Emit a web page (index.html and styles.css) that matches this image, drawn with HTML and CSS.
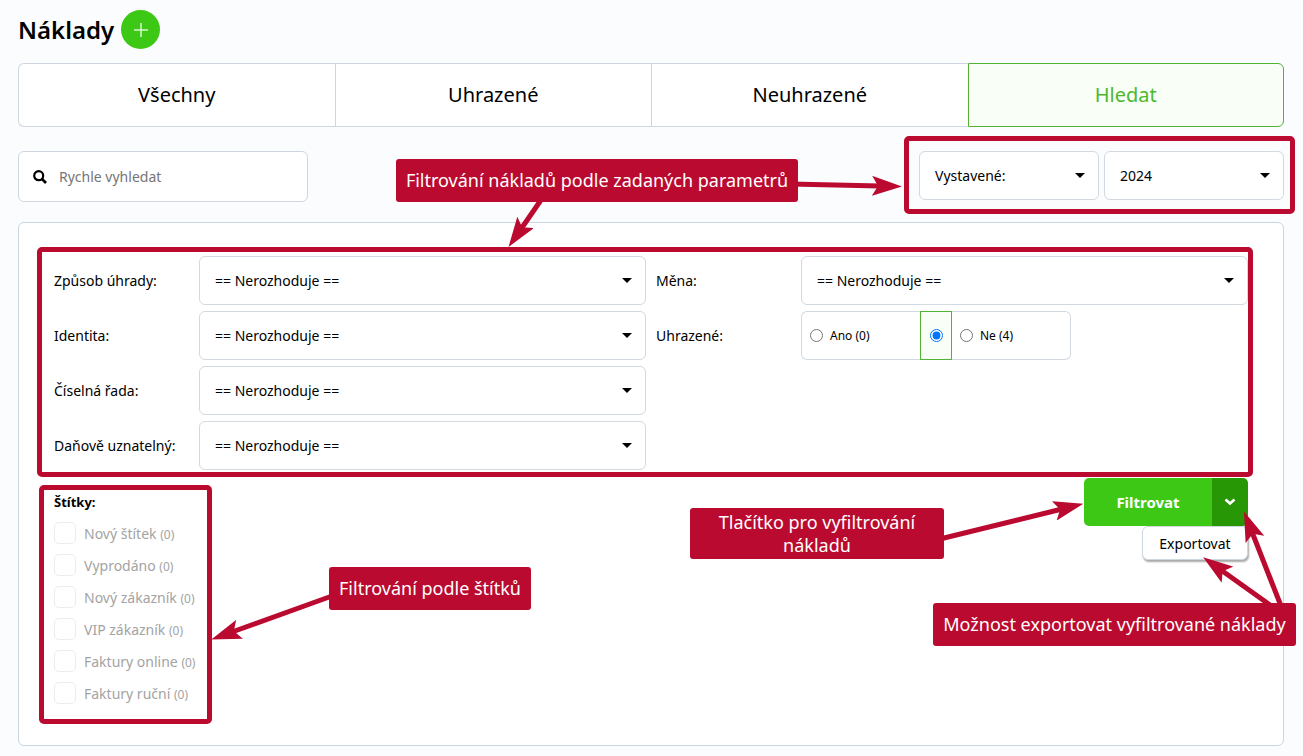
FILE: index.html
```html
<!DOCTYPE html>
<html lang="cs">
<head>
    <meta charset="UTF-8">
    <meta name="viewport" content="width=device-width, initial-scale=1.0">
    <title>Náklady</title>
    <link rel="stylesheet" href="styles.css">
</head>
<body>
    <header class="page-header">
        <h1>Náklady</h1>
        <button type="button" class="add-button" aria-label="Přidat náklad">
            <svg width="14" height="14" viewBox="0 0 14 14"><path d="M7 0v14M0 7h14" stroke="#d5f5cc" stroke-width="1.5"/></svg>
        </button>
    </header>

    <nav class="tabs">
        <a href="#vsechny">Všechny</a>
        <a href="#uhrazene">Uhrazené</a>
        <a href="#neuhrazene">Neuhrazené</a>
        <a href="#hledat" class="active">Hledat</a>
    </nav>

    <div class="toolbar">
        <label class="search">
            <svg width="14" height="14" viewBox="0 0 14 14" fill="none" stroke="#000"><circle cx="5.7" cy="5.7" r="4.5" stroke-width="2.2"/><path d="M9 9l4 4" stroke-width="2.6"/></svg>
            <input type="text" placeholder="Rychle vyhledat" aria-label="Rychle vyhledat">
        </label>
        <div class="period marked">
            <div class="select"><select aria-label="Typ data"><option>Vystavené:</option></select></div>
            <div class="select"><select aria-label="Rok"><option>2024</option></select></div>
        </div>
    </div>

    <form class="panel">
        <div class="filters marked">
            <div class="column">
                <div class="field">
                    <label for="payment">Způsob úhrady:</label>
                    <div class="select"><select id="payment"><option>== Nerozhoduje ==</option></select></div>
                </div>
                <div class="field">
                    <label for="identity">Identita:</label>
                    <div class="select"><select id="identity"><option>== Nerozhoduje ==</option></select></div>
                </div>
                <div class="field">
                    <label for="series">Číselná řada:</label>
                    <div class="select"><select id="series"><option>== Nerozhoduje ==</option></select></div>
                </div>
                <div class="field">
                    <label for="deductible">Daňově uznatelný:</label>
                    <div class="select"><select id="deductible"><option>== Nerozhoduje ==</option></select></div>
                </div>
            </div>
            <div class="column">
                <div class="field">
                    <label for="currency">Měna:</label>
                    <div class="select"><select id="currency"><option>== Nerozhoduje ==</option></select></div>
                </div>
                <div class="field" role="radiogroup" aria-labelledby="paid-label">
                    <span id="paid-label" class="field-name">Uhrazené:</span>
                    <div class="radios">
                        <label class="radio"><input type="radio" name="paid" value="1">Ano (0)</label>
                        <label class="radio any"><input type="radio" name="paid" value="" aria-label="Nerozhoduje" checked></label>
                        <label class="radio"><input type="radio" name="paid" value="0">Ne (4)</label>
                    </div>
                </div>
            </div>
        </div>

        <div class="panel-bottom">
            <div class="tags marked">
                <h2>Štítky:</h2>
                <label class="tag"><input type="checkbox" disabled><span>Nový štítek <small>(0)</small></span></label>
                <label class="tag"><input type="checkbox" disabled><span>Vyprodáno <small>(0)</small></span></label>
                <label class="tag"><input type="checkbox" disabled><span>Nový zákazník <small>(0)</small></span></label>
                <label class="tag"><input type="checkbox" disabled><span>VIP zákazník <small>(0)</small></span></label>
                <label class="tag"><input type="checkbox" disabled><span>Faktury online <small>(0)</small></span></label>
                <label class="tag"><input type="checkbox" disabled><span>Faktury ruční <small>(0)</small></span></label>
            </div>
            <div class="actions">
                <div class="split-button">
                    <button type="submit" class="filter-button">Filtrovat</button>
                    <button type="button" class="more-button" aria-label="Další akce">
                        <svg width="12" height="8" viewBox="0 0 12 8"><path d="M1.500 1.500L6 5.500l4.500-4" fill="none" stroke="#fff" stroke-width="2.600"/></svg>
                    </button>
                </div>
                <button type="button" class="export-button">Exportovat</button>
            </div>
        </div>
    </form>

    <!-- notes over the page -->
    <div class="notes">
        <svg class="arrows" width="1303" height="756" viewBox="0 0 1303 756">
            <defs>
                <marker id="head" markerUnits="userSpaceOnUse" markerWidth="30" markerHeight="20" refX="8" refY="10" orient="auto">
                    <path d="M0 0L30 10L0 20L6 10z" fill="#bb0a30"/>
                </marker>
            </defs>
            <g stroke="#bb0a30" stroke-width="5">
                <path d="M790 184L880 186" marker-end="url(#head)"/>
                <path d="M541 200L521 229" marker-end="url(#head)"/>
                <path d="M332 596L232 632" marker-end="url(#head)"/>
                <path d="M940 539L1062 509" marker-end="url(#head)"/>
                <path d="M1270 605L1221 570" marker-end="url(#head)"/>
                <path d="M1281 606L1252 532" marker-end="url(#head)"/>
            </g>
        </svg>
        <p class="note note-params">Filtrování nákladů podle zadaných parametrů</p>
        <p class="note note-button">Tlačítko pro vyfiltrování nákladů</p>
        <p class="note note-tags">Filtrování podle štítků</p>
        <p class="note note-export">Možnost exportovat vyfiltrované náklady</p>
    </div>
</body>
</html>
```

FILE: styles.css
```css
* {
    box-sizing: border-box;
}

body {
    position: relative;
    margin: 0;
    padding: 10px 19px 10px 18px;
    background: #fbfcfe;
    color: #000;
    font-family: "Noto Sans", sans-serif;
    font-size: 14px;
}

input,
select,
button {
    font: inherit;
    color: inherit;
}

.page-header {
    display: flex;
    align-items: center;
    gap: 7px;
    margin-bottom: 14px;
}

h1 {
    margin: 0;
    font-size: 24px;
    line-height: 36px;
    font-weight: 600;
}

.add-button {
    display: flex;
    align-items: center;
    justify-content: center;
    width: 39px;
    height: 39px;
    padding: 0;
    border: none;
    border-radius: 50%;
    background: #3dc816;
}

/* tabs */
.tabs {
    display: grid;
    grid-template-columns: repeat(4, 1fr);
    margin-bottom: 24px;
}

.tabs a {
    height: 64px;
    border: 1px solid #ced7e0;
    border-right: none;
    background: #fff;
    color: #000;
    font-size: 20px;
    line-height: 62px;
    text-align: center;
    text-decoration: none;
}

.tabs a:first-child {
    border-radius: 6px 0 0 6px;
}

.tabs .active {
    border: 1px solid #52b435;
    border-radius: 0 6px 6px 0;
    background: #f9fff7;
    color: #4cb92d;
}

/* search and period */
.toolbar {
    display: flex;
    justify-content: space-between;
    align-items: flex-start;
    margin-bottom: 20px;
}

.search {
    display: flex;
    align-items: center;
    gap: 12px;
    width: 290px;
    height: 51px;
    padding: 0 14px;
    border: 1px solid #ced7e0;
    border-radius: 6px;
    background: #fff;
}

.search input {
    flex: 1;
    min-width: 0;
    padding: 0;
    border: none;
    outline: none;
    background: none;
}

.search input::placeholder {
    color: #757575;
}

.period {
    display: grid;
    grid-template-columns: 180px 180px;
    gap: 5px;
}

.select {
    position: relative;
    flex: 1;
}

.select::after {
    content: "";
    position: absolute;
    top: 22px;
    right: 14px;
    border: 5px solid transparent;
    border-top-color: #000;
    border-bottom: none;
    pointer-events: none;
}

.select select {
    display: block;
    width: 100%;
    height: 49px;
    padding: 0 30px 0 15px;
    border: 1px solid #d3d9e0;
    border-radius: 6px;
    background: #fff;
    appearance: none;
}

/* red frame around a highlighted group */
.marked {
    position: relative;
}

.marked::after {
    content: "";
    position: absolute;
    border: 5px solid #bb0a30;
    border-radius: 5px;
    pointer-events: none;
}

.period::after {
    inset: -15px -11px -14px -15px;
}

.filters::after {
    inset: -9px -5px -7px -17px;
}

.tags::after {
    inset: 7px 0 -20px -15px;
}

/* filter panel */
.panel {
    padding: 33px 35px 41px;
    border: 1px solid #c8d6e2;
    border-radius: 6px;
    background: #fff;
}

.filters {
    display: grid;
    grid-template-columns: 1fr 1fr;
    gap: 10px;
}

.column {
    display: flex;
    flex-direction: column;
    gap: 6px;
}

.field {
    display: flex;
    align-items: center;
}

.field > label,
.field-name {
    width: 145px;
}

.radios {
    display: grid;
    grid-template-columns: 119px 32px 119px;
    height: 49px;
    border-radius: 6px;
    font-size: 12px;
}

.radio {
    display: flex;
    align-items: center;
    gap: 7px;
    padding-left: 8px;
    border: 1px solid #d3d9e0;
}

.radio input {
    width: 13px;
    height: 13px;
    margin: 0;
}

.radio:first-child {
    border-right: none;
    border-radius: 6px 0 0 6px;
}

.radio:last-child {
    border-left: none;
    border-radius: 0 6px 6px 0;
}

.radio.any {
    justify-content: center;
    padding: 0;
    border-color: #52b435;
    background: #f9fff7;
}

.panel-bottom {
    display: flex;
    justify-content: space-between;
    align-items: flex-start;
    padding-top: 8px;
}

.tags {
    display: flex;
    flex-direction: column;
    gap: 10px;
    width: 158px;
    padding-top: 14px;
}

.tags h2 {
    margin: 0;
    font-size: 13px;
    line-height: 20px;
    font-weight: 700;
}

.tag {
    display: flex;
    align-items: center;
    gap: 8px;
    height: 22px;
    color: #a3a3a3;
    white-space: nowrap;
}

.tag input {
    width: 22px;
    height: 22px;
    margin: 0;
    border: 1px solid #ececec;
    border-radius: 5px;
    background: #fff;
    appearance: none;
}

.tag small {
    font-size: 12px;
}

.actions {
    display: flex;
    flex-direction: column;
    align-items: flex-end;
}

.split-button {
    display: flex;
    height: 48px;
    border-radius: 5px;
    overflow: hidden;
    color: #fff;
}

.split-button button {
    border: none;
}

.filter-button {
    width: 128px;
    background: #3dc816;
    font-size: 15px;
    font-weight: 700;
}

.more-button {
    display: flex;
    align-items: center;
    justify-content: center;
    width: 36px;
    background: #279706;
}

.export-button {
    width: 106px;
    height: 34px;
    padding: 0;
    border: 1px solid #ced7e0;
    border-radius: 6px;
    background: #fff;
    box-shadow: 1px 2px 2px rgba(0, 0, 0, 0.35);
}

/* notes */
.notes {
    position: absolute;
    top: 0;
    left: 0;
    pointer-events: none;
}

.arrows {
    display: block;
}

.note {
    position: absolute;
    display: flex;
    align-items: center;
    justify-content: center;
    margin: 0;
    border-radius: 3px;
    background: #bb0a30;
    color: #fff;
    font-size: 18px;
    line-height: 23px;
    text-align: center;
}

.note-params {
    top: 159px;
    left: 396px;
    width: 402px;
    height: 43px;
}

.note-button {
    top: 508px;
    left: 690px;
    width: 254px;
    height: 51px;
    padding: 0 20px;
}

.note-tags {
    top: 567px;
    left: 329px;
    width: 202px;
    height: 43px;
}

.note-export {
    top: 603px;
    left: 933px;
    width: 363px;
    height: 43px;
}
```
